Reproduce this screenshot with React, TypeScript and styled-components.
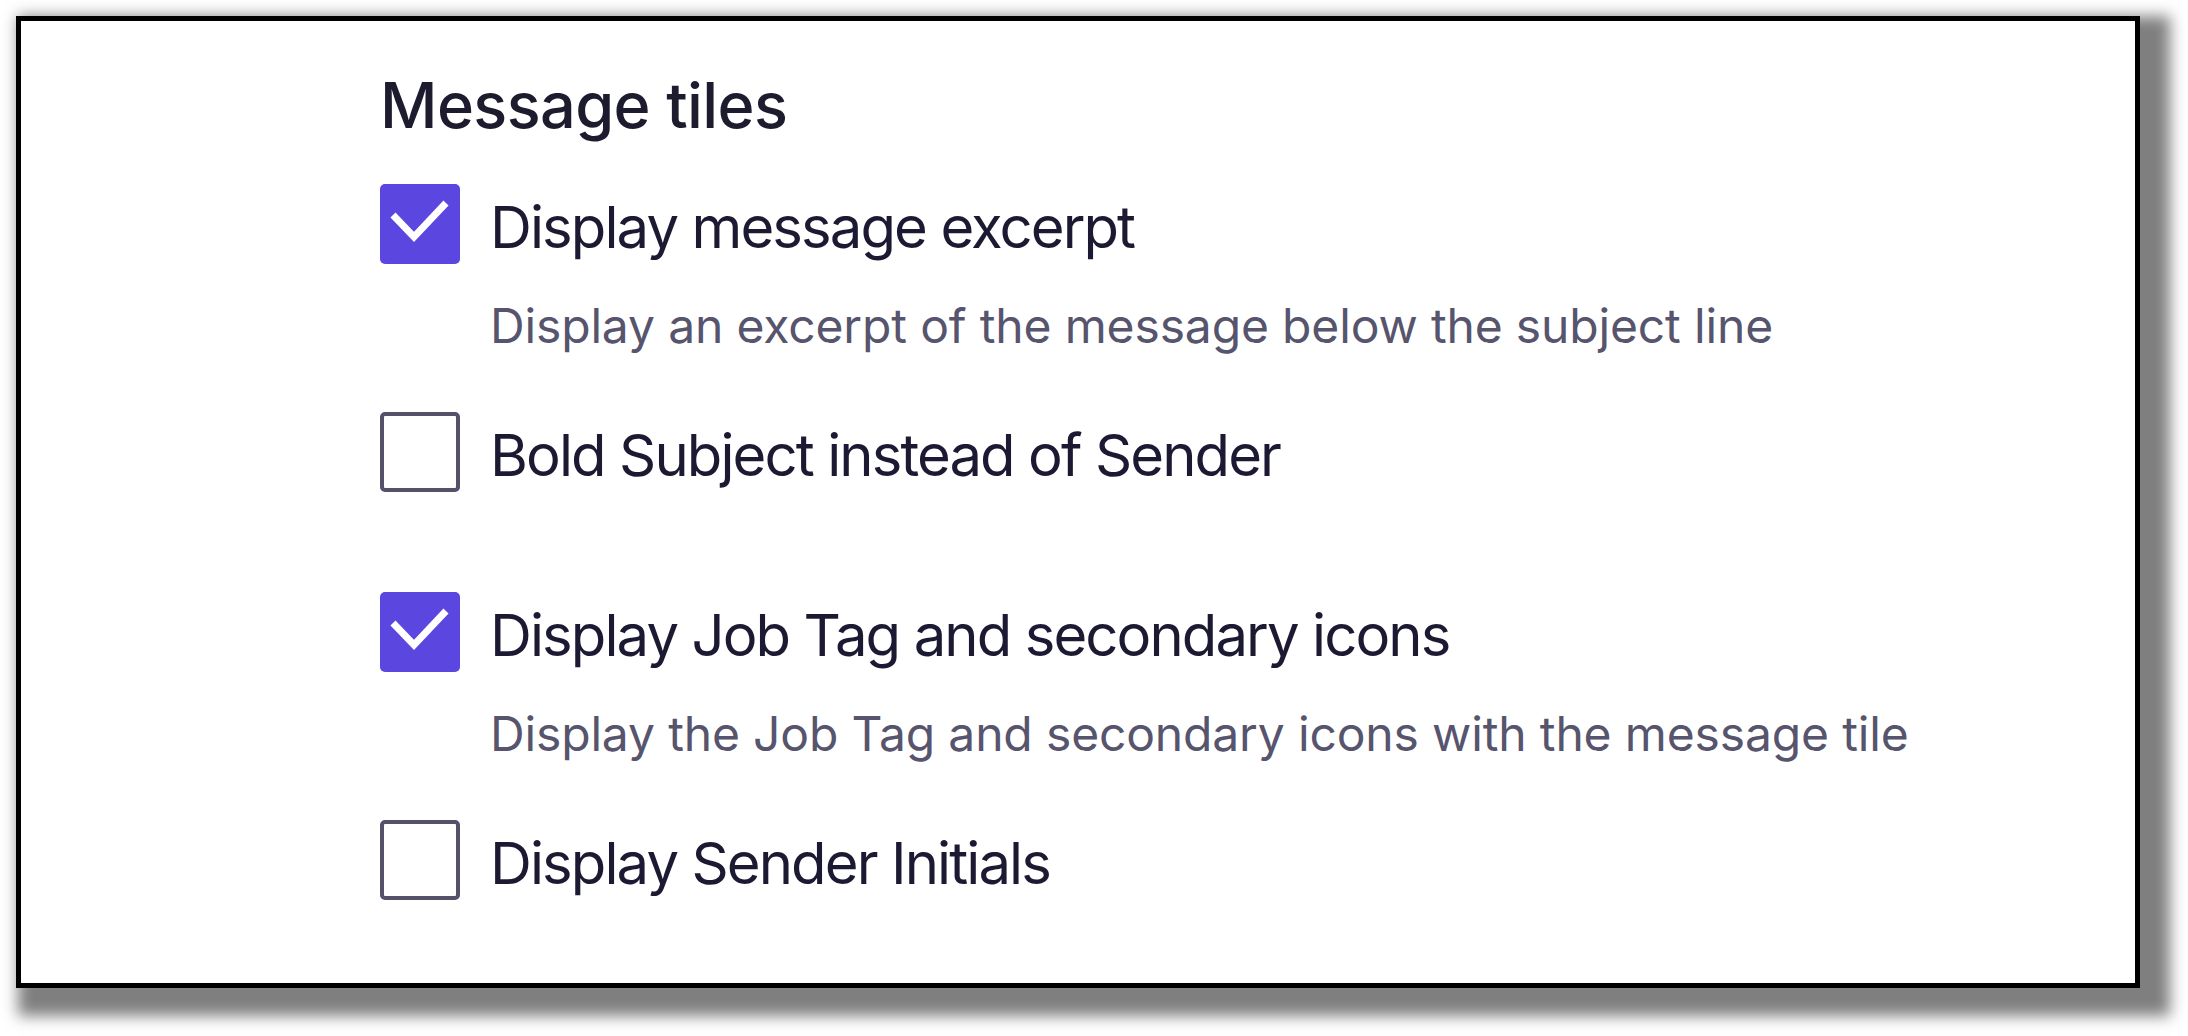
import styled, { createGlobalStyle } from "styled-components";

/* ── Types ── */
interface TileOption {
  label: string;
  description?: string;
  checked: boolean;
}

const options: TileOption[] = [
  {
    label: "Display message excerpt",
    description: "Display an excerpt of the message below the subject line",
    checked: true,
  },
  { label: "Bold Subject instead of Sender", checked: false },
  {
    label: "Display Job Tag and secondary icons",
    description: "Display the Job Tag and secondary icons with the message tile",
    checked: true,
  },
  { label: "Display Sender Initials", checked: false },
];

/* ── Styled Components ── */
const GlobalStyle = createGlobalStyle`
  html, body {
    margin: 0;
    padding: 0;
    background: #ffffff;
  }

  body {
    font-family: Inter, "Noto Sans", sans-serif;
  }
`;

const Page = styled.div`
  width: 2188px;
  height: 1036px;
  padding: 16px 0 0 16px;
  box-sizing: border-box;
  overflow: hidden;
`;

const Panel = styled.section`
  width: 2124px;
  height: 972px;
  box-sizing: border-box;
  border: 5px solid #000000;
  background: #ffffff;
  box-shadow: 16px 14px 14px 14px rgba(0, 0, 0, 0.5);
  padding: 46px 0 0 359px;
`;

const Heading = styled.h2`
  margin: 0 0 41px;
  font-size: 63px;
  line-height: 76px;
  font-weight: 500;
  letter-spacing: -0.6px;
  color: #1d1b2e;
`;

const OptionList = styled.div`
  display: flex;
  flex-direction: column;
  gap: 50px;
`;

const OptionRow = styled.label`
  display: flex;
  align-items: flex-start;
  gap: 30px;
  min-height: 130px;
  cursor: pointer;
`;

const Box = styled.span<{ $checked: boolean }>`
  flex: 0 0 auto;
  width: 80px;
  height: 80px;
  box-sizing: border-box;
  border-radius: 5px;
  display: flex;
  align-items: center;
  justify-content: center;
  background: ${(p) => (p.$checked ? "#5b46e0" : "#ffffff")};
  border: ${(p) => (p.$checked ? "none" : "4px solid #55516b")};
`;

const TextColumn = styled.div`
  display: flex;
  flex-direction: column;
`;

const Label = styled.span`
  font-size: 58px;
  line-height: 86px;
  font-weight: 400;
  letter-spacing: -1.9px;
  color: #1c1a32;
  white-space: nowrap;
`;

const Description = styled.span`
  margin-top: 20px;
  font-size: 48px;
  line-height: 72px;
  letter-spacing: -0.15px;
  color: #57546d;
  white-space: nowrap;
`;

/* ── Component ── */
const CheckMark = () => (
  <svg width="80" height="80" viewBox="0 0 80 80" aria-hidden="true">
    <path
      d="M13 31 L34 53 L66 19"
      fill="none"
      stroke="#ffffff"
      strokeWidth="7"
      strokeLinecap="butt"
      strokeLinejoin="miter"
    />
  </svg>
);

export default function App() {
  return (
    <>
      <GlobalStyle />
      <Page>
        <Panel>
          <Heading>Message tiles</Heading>
          <OptionList>
            {options.map((opt) => (
              <OptionRow key={opt.label}>
                <Box $checked={opt.checked}>{opt.checked && <CheckMark />}</Box>
                <TextColumn>
                  <Label>{opt.label}</Label>
                  {opt.description && <Description>{opt.description}</Description>}
                </TextColumn>
              </OptionRow>
            ))}
          </OptionList>
        </Panel>
      </Page>
    </>
  );
}
